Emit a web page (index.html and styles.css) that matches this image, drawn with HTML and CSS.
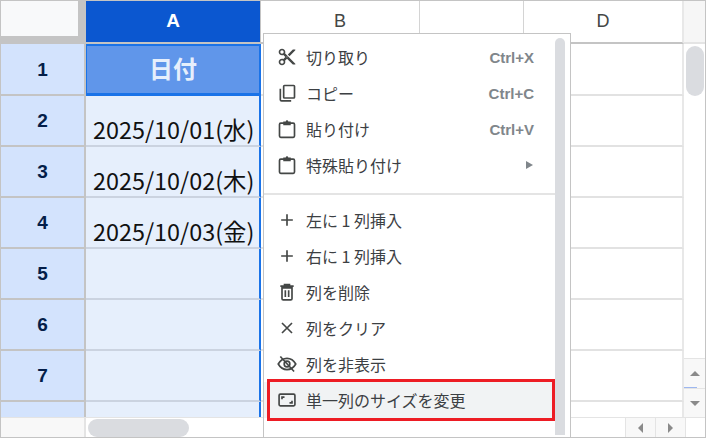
FILE: index.html
```html
<!DOCTYPE html>
<html lang="ja">
<head>
<meta charset="utf-8">
<title>シート</title>
<link rel="stylesheet" href="styles.css">
</head>
<body>
<div class="app">
  <div class="top">
    <div class="grid">
      <div class="corner"></div>
      <div class="col col-a">A</div>
      <div class="col col-b">B</div>
      <div class="col col-c"></div>
      <div class="col col-d">D</div>

      <div class="rh r1">1</div><div class="a a1 r1">日付</div><div class="rest r1"></div>
      <div class="rh r2">2</div><div class="a date r2">2025/10/01(水)</div><div class="rest r2"></div>
      <div class="rh r3">3</div><div class="a date r3">2025/10/02(木)</div><div class="rest r3"></div>
      <div class="rh r4">4</div><div class="a date r4">2025/10/03(金)</div><div class="rest r4"></div>
      <div class="rh r5">5</div><div class="a r5"></div><div class="rest r5"></div>
      <div class="rh r6">6</div><div class="a r6"></div><div class="rest r6"></div>
      <div class="rh r7">7</div><div class="a r7"></div><div class="rest r7"></div>
      <div class="rh r8 last"></div><div class="a r8 last"></div><div class="rest r8 last"></div>
    </div>
    <div class="vscroll">
      <div class="vhead"></div>
      <div class="vthumb"></div>
      <div class="vspace"></div>
      <div class="vbtn up"><span class="tri tri-up"></span></div>
      <div class="vbtn down"><span class="tri tri-down"></span></div>
    </div>
  </div>
  <div class="hscroll">
    <div class="hleft"></div>
    <div class="htrack"><div class="hthumb"></div></div>
    <div class="hbtn"><span class="tri tri-left"></span></div>
    <div class="hbtn"><span class="tri tri-right"></span></div>
    <div class="hend"></div>
  </div>

  <div class="menu">
    <div class="list">
      <div class="item">
        <svg class="ic" viewBox="0 0 24 24"><path class="fill" d="M9.64 7.64c.23-.5.36-1.05.36-1.64 0-2.21-1.79-4-4-4S2 3.79 2 6s1.79 4 4 4c.59 0 1.14-.13 1.64-.36L10 12l-2.36 2.36C7.14 14.13 6.59 14 6 14c-2.21 0-4 1.79-4 4s1.79 4 4 4 4-1.79 4-4c0-.59-.13-1.14-.36-1.64L12 14l7 7h3v-1L9.64 7.64zM6 8c-1.1 0-2-.89-2-2s.9-2 2-2 2 .89 2 2-.9 2-2 2zm0 12c-1.1 0-2-.89-2-2s.9-2 2-2 2 .89 2 2-.9 2-2 2zm6-7.5c-.28 0-.5-.22-.5-.5s.22-.5.5-.5.5.22.5.5-.22.5-.5.5zM19 3l-6 6 2 2 7-7V3z"/></svg>
        <span class="label">切り取り</span><span class="key">Ctrl+X</span>
      </div>
      <div class="item">
        <svg class="ic" viewBox="0 0 24 24"><rect class="line" x="8" y="3" width="13" height="15" rx="1"/><path class="line" d="M4 7v13a1.5 1.5 0 0 0 1.5 1.5H17"/></svg>
        <span class="label">コピー</span><span class="key">Ctrl+C</span>
      </div>
      <div class="item">
        <svg class="ic" viewBox="0 0 24 24"><rect class="line" x="3" y="5" width="18" height="17" rx="1.5"/><path class="fill" d="M7.5 3h3a1.5 1.5 0 0 1 3 0h3v4.5h-9z"/></svg>
        <span class="label">貼り付け</span><span class="key">Ctrl+V</span>
      </div>
      <div class="item">
        <svg class="ic" viewBox="0 0 24 24"><rect class="line" x="3" y="5" width="18" height="17" rx="1.5"/><path class="fill" d="M7.5 3h3a1.5 1.5 0 0 1 3 0h3v4.5h-9z"/></svg>
        <span class="label">特殊貼り付け</span><span class="arrow"></span>
      </div>
      <div class="sep"></div>
      <div class="item">
        <svg class="ic" viewBox="0 0 24 24"><path class="line" d="M12 5v14M5 12h14"/></svg>
        <span class="label">左に 1 列挿入</span>
      </div>
      <div class="item">
        <svg class="ic" viewBox="0 0 24 24"><path class="line" d="M12 5v14M5 12h14"/></svg>
        <span class="label">右に 1 列挿入</span>
      </div>
      <div class="item">
        <svg class="ic" viewBox="0 0 24 24"><path class="line" d="M6 7h12v13a1.5 1.5 0 0 1-1.5 1.5h-9A1.5 1.5 0 0 1 6 20zM4 5h16M9 4V3h6v1M10 10v8M14 10v8"/></svg>
        <span class="label">列を削除</span>
      </div>
      <div class="item">
        <svg class="ic" viewBox="0 0 24 24"><path class="line" d="M6 6l12 12M18 6L6 18"/></svg>
        <span class="label">列をクリア</span>
      </div>
      <div class="item">
        <svg class="ic" viewBox="0 0 24 24"><path class="line" d="M1.5 12C4 7.5 7.8 5.3 12 5.3S20 7.5 22.5 12C20 16.5 16.2 18.7 12 18.7S4 16.5 1.5 12z"/><circle class="line" cx="12" cy="12" r="3.4"/><path class="line" d="M4 3l16.5 18"/></svg>
        <span class="label">列を非表示</span>
      </div>
      <div class="item marked">
        <svg class="ic" viewBox="0 0 24 24"><rect class="line" x="2.5" y="5" width="19" height="14" rx="1.5"/><path class="line" d="M6 11V8.5h3M18 13v2.5h-3"/></svg>
        <span class="label">単一列のサイズを変更</span>
      </div>
    </div>
    <div class="mthumb"></div>
  </div>
</div>
</body>
</html>
```

FILE: styles.css
```css
* { box-sizing: border-box; }
html, body { margin: 0; padding: 0; background: #fff; }
body { width: 708px; height: 438px; overflow: hidden; font-family: "Liberation Sans", "Noto Sans CJK JP", sans-serif; }

.app {
  position: relative;
  width: 706px;
  height: 438px;
  display: flex;
  flex-direction: column;
  border: 1px solid #c4c4c4;
  overflow: hidden;
}
.top { display: flex; height: 416px; }

.grid {
  width: 683px;
  display: grid;
  grid-template-columns: 85px 175px 159px 104px 160px;
  grid-template-rows: 43px 52px 51px 51px 51px 51px 51px 51px 15px;
}

.corner {
  background: #f8f9fa;
  border-right: 8px solid #c4c4c4;
  border-bottom: 8px solid #c4c4c4;
}
.col {
  display: flex;
  align-items: center;
  justify-content: center;
  padding-bottom: 1px;
  font-size: 18px;
  color: #444746;
  border-right: 1px solid #d4d4d4;
  border-bottom: 2px solid #c4c4c4;
  font-family: "Liberation Sans", sans-serif;
}
.col-a {
  background: #0b57d0;
  color: #fff;
  font-weight: 700;
  font-size: 19px;
  border-right: 1px solid #c4c4c4;
}
.col-d { border-right: 2px solid #e8e8e8; }

.rh {
  display: flex;
  align-items: center;
  justify-content: center;
  background: #d3e3fd;
  color: #041e49;
  font-weight: 700;
  font-size: 19px;
  padding-top: 1px;
  border-right: 2px solid #c4c4c4;
  border-bottom: 2px solid #c4c4c4;
}
.a {
  background: #e6effc;
  border-bottom: 2px solid #cbd3e0;
  border-right: 2px solid #1a73e8;
  font-family: "Noto Sans CJK JP", sans-serif;
  color: #111;
}
.a1 {
  display: flex;
  align-items: center;
  justify-content: center;
  background: #6096ea;
  color: #e6effc;
  font-weight: 700;
  font-size: 24px;
  padding-bottom: 4px;
  border: 2px solid #1a73e8;
  border-left-width: 1px;
  border-bottom-width: 3px;
}
.date {
  display: flex;
  align-items: flex-end;
  padding: 0 0 1px 7px;
  font-size: 23.4px;
  white-space: nowrap;
  line-height: 1.3;
}
.rest {
  grid-column: 3 / 6;
  border-bottom: 2px solid #e2e2e2;
  border-right: 2px solid #e8e8e8;
}
.last { border-bottom: 0; }

.vscroll { flex: 1; display: flex; flex-direction: column; background: #fff; }
.vhead { height: 43px; background: #f6f6f6; border-bottom: 2px solid #e4e4e4; }
.vthumb { width: 18px; height: 50px; margin: 2px 0 0 2px; border-radius: 9px; background: #dadce0; }
.vspace { flex: 1; }
.vbtn {
  height: 30px;
  background: #f8f8f8;
  border-top: 1px solid #e4e4e4;
  display: flex;
  align-items: center;
  justify-content: center;
}
.vbtn.up { position: relative; }
.vbtn.up::after {
  content: "";
  position: absolute;
  left: 0;
  bottom: 0;
  width: 13px;
  height: 1px;
  background: #9db7f0;
}
.vbtn.down { height: 29px; }

.hscroll { flex: 1; display: flex; border-top: 1px solid #e4e4e4; }
.hleft { width: 85px; background: #f8f8f8; border-right: 2px solid #e4e4e4; }
.htrack { width: 539px; padding: 1px 0 0 2px; }
.hthumb { width: 101px; height: 18px; border-radius: 9px; background: #dadce0; }
.hbtn {
  width: 30px;
  background: #f8f8f8;
  border-left: 1px solid #e4e4e4;
  display: flex;
  align-items: center;
  justify-content: center;
}
.hend { flex: 1; border-left: 1px solid #e4e4e4; }

.tri { width: 0; height: 0; border-style: solid; border-color: transparent; }
.tri-up { border-width: 0 5px 5px; border-bottom-color: #8a8a8a; }
.tri-down { border-width: 5px 5px 0; border-top-color: #8a8a8a; }
.tri-left { border-width: 5px 5px 5px 0; border-right-color: #8a8a8a; }
.tri-right { border-width: 5px 0 5px 5px; border-left-color: #8a8a8a; }

.menu {
  position: absolute;
  left: 262px;
  top: 32px;
  width: 308px;
  height: 406px;
  background: #fff;
  border: 1px solid #c4c4c4;
  display: flex;
}
.list { width: 291px; padding-top: 5px; flex: none; }
.mthumb {
  width: 10px;
  margin: 4px 0 3px;
  border-radius: 5px 5px 0 0;
  background: #dadce0;
}
.item {
  position: relative;
  height: 36px;
  display: flex;
  align-items: center;
  padding-left: 13px;
  font-family: "Noto Sans CJK JP", sans-serif;
  font-size: 16px;
  color: #3c4043;
}
.ic { width: 20px; height: 20px; flex: none; }
.fill { fill: #444746; }
.line { fill: none; stroke: #444746; stroke-width: 2; }
.label { margin-left: 9px; white-space: nowrap; flex: 1; }
.key {
  font-family: "Liberation Sans", sans-serif;
  font-size: 15px;
  color: #80868b;
  font-weight: 700;
  padding-right: 21px;
}
.arrow {
  width: 0;
  height: 0;
  margin-right: 22px;
  border-style: solid;
  border-width: 4px 0 4px 7px;
  border-color: transparent transparent transparent #80868b;
}
.sep { height: 2px; margin: 10px 0 7px; background: #e4e4e4; }
.marked { background: #f1f3f4; }
.marked::after {
  content: "";
  position: absolute;
  left: 3px;
  right: 0;
  top: -3px;
  bottom: -3px;
  border: 3px solid #ed1c24;
}
```
